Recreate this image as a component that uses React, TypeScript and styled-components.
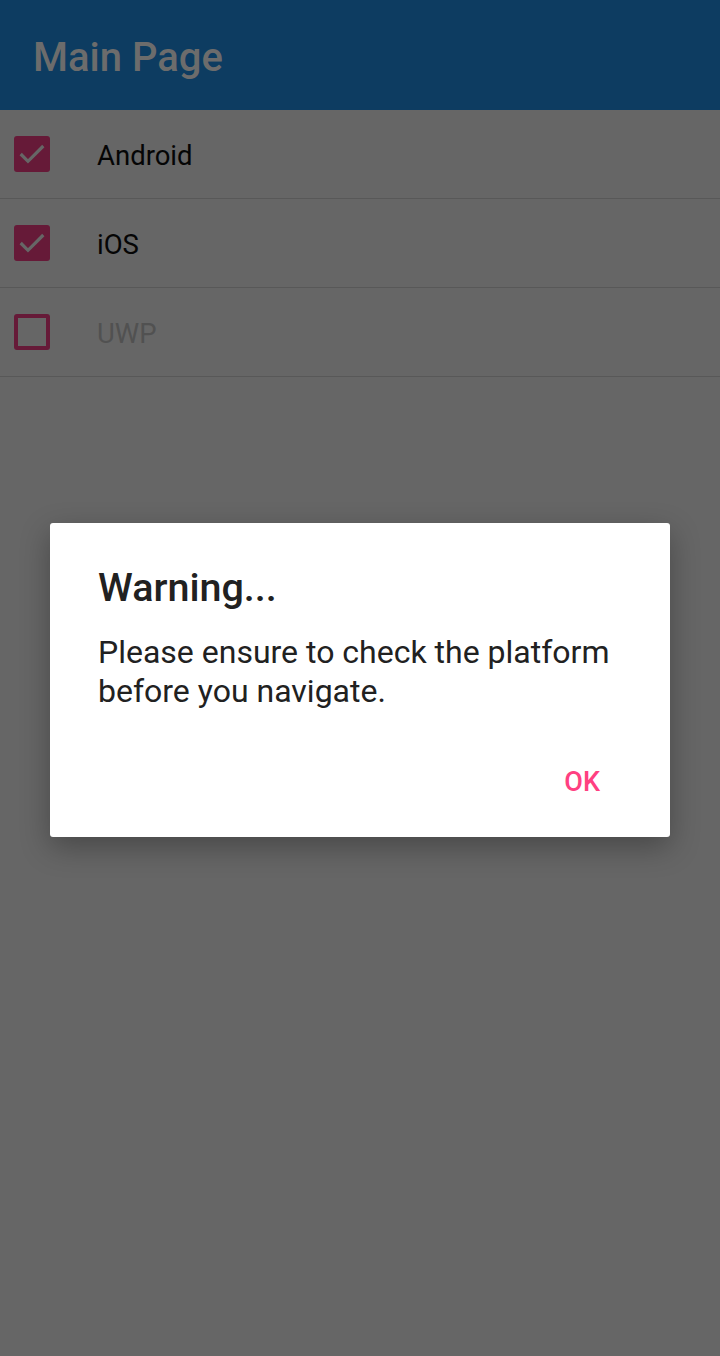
import React from "react";
import styled, { createGlobalStyle } from "styled-components";

const Global = createGlobalStyle`
  html, body { margin: 0; padding: 0; background: #666666; }
  body { font-family: Roboto, "Noto Sans", sans-serif; }
`;

const Screen = styled.div`
  position: relative;
  width: 720px;
  height: 1356px;
  background: #666666;
  overflow: hidden;
`;

const Header = styled.header`
  height: 110px;
  background: #0d3c61;
  display: flex;
  align-items: center;
  padding-left: 33px;
  box-sizing: border-box;
`;

const Title = styled.h1`
  margin: 4px 0 0 0;
  font-size: 40px;
  font-weight: 500;
  color: #6c6c6c;
`;

const List = styled.ul`
  list-style: none;
  margin: 0;
  padding: 0;
`;

const Row = styled.li`
  height: 89px;
  display: flex;
  align-items: center;
  border-bottom: 1px solid #585858;
  box-sizing: border-box;
`;

const Box = styled.span<{ $checked: boolean }>`
  width: 36px;
  height: 36px;
  margin-left: 14px;
  box-sizing: border-box;
  border-radius: 3px;
  background: ${(p) => (p.$checked ? "#661a38" : "transparent")};
  border: ${(p) => (p.$checked ? "none" : "4px solid #661a38")};
  display: flex;
  align-items: center;
  justify-content: center;
`;

const Label = styled.span<{ $muted: boolean }>`
  margin-left: 47px;
  margin-top: 3px;
  font-size: 27.5px;
  color: ${(p) => (p.$muted ? "#515151" : "#050505")};
`;

const Dialog = styled.div`
  position: absolute;
  left: 50px;
  top: 523px;
  width: 620px;
  height: 314px;
  background: #ffffff;
  border-radius: 3px;
  box-shadow: 0 10px 30px rgba(0, 0, 0, 0.3);
  box-sizing: border-box;
  padding: 40px 48px 0 48px;
  display: flex;
  flex-direction: column;
`;

const DTitle = styled.h2`
  margin: 0;
  font-size: 39.5px;
  font-weight: 500;
  color: #212121;
  line-height: 50px;
`;

const DBody = styled.p`
  margin: 20px 0 0 0;
  font-size: 32px;
  line-height: 39px;
  color: #212121;
`;

const Actions = styled.div`
  display: flex;
  justify-content: flex-end;
  margin-top: 47px;
  margin-right: 6px;
`;

const Button = styled.button`
  border: none;
  background: none;
  font-family: Roboto, sans-serif;
  font-size: 27px;
  line-height: 32px;
  font-weight: 500;
  color: #ff4081;
  padding: 8px 16px;
`;

const Check = () => (
  <svg width="32" height="32" viewBox="0 0 24 24">
    <path d="M3.5 12 L9 17.5 L20.5 6" fill="none" stroke="#666666" strokeWidth="2.4" />
  </svg>
);

const items = [
  { name: "Android", checked: true },
  { name: "iOS", checked: true },
  { name: "UWP", checked: false },
];

export default function App() {
  return (
    <Screen>
      <Global />
      <Header>
        <Title>Main Page</Title>
      </Header>
      <List>
        {items.map((it) => (
          <Row key={it.name}>
            <Box $checked={it.checked}>{it.checked && <Check />}</Box>
            <Label $muted={!it.checked}>{it.name}</Label>
          </Row>
        ))}
      </List>
      <Dialog>
        <DTitle>Warning...</DTitle>
        <DBody>
          Please ensure to check the platform
          <br />
          before you navigate.
        </DBody>
        <Actions>
          <Button>OK</Button>
        </Actions>
      </Dialog>
    </Screen>
  );
}
